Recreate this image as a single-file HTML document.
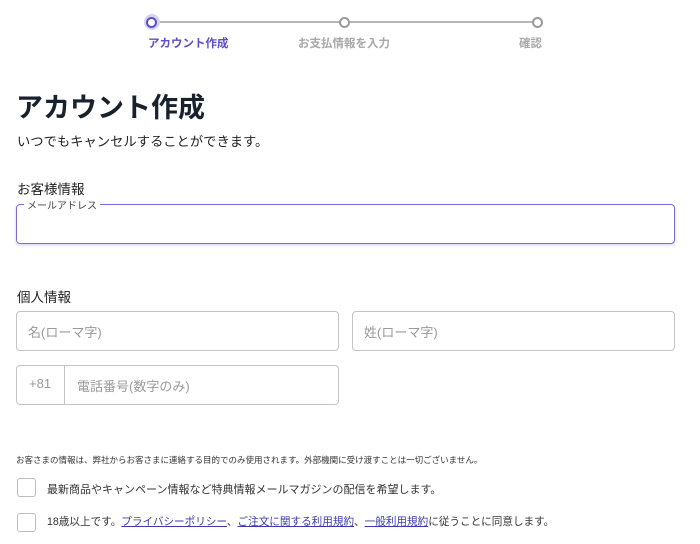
<!DOCTYPE html>
<html><head><meta charset="utf-8"><style>
body{margin:0;width:700px;height:544px;background:#fff;font-family:"Liberation Sans","Noto Sans CJK JP",sans-serif;color:#222;position:relative;overflow:hidden}
.a{position:absolute;white-space:nowrap}
.line{position:absolute;top:21px;height:2px;background:#b5b5b5}
.dot{position:absolute;width:7px;height:7px;border:2px solid #9a9a9a;border-radius:50%;background:#fff;top:17px}
.inp{position:absolute;border:1px solid #c4c4c4;border-radius:4px;box-sizing:border-box;background:#fff}
.ph{position:absolute;color:#9a9a9a;font-size:13px}
.cb{position:absolute;left:17px;width:19px;height:19px;border:1px solid #bdbdbd;border-radius:3px;box-sizing:border-box}
a{color:#3b3bb0;text-decoration:underline}
</style></head><body>
<div class="line" style="left:152px;width:386px"></div>
<div class="a" style="left:144px;top:14px;width:16px;height:16px;border-radius:50%;background:#d6d2f3"></div>
<div class="dot" style="left:146px;border-color:#5b4fc4"></div>
<div class="dot" style="left:339px"></div>
<div class="dot" style="left:532px"></div>
<div class="a" style="left:148px;top:35px;font-size:11.5px;font-weight:bold;color:#5b4fc4">アカウント作成</div>
<div class="a" style="left:298px;top:35px;font-size:11.5px;font-weight:bold;color:#a8a8a8">お支払情報を入力</div>
<div class="a" style="left:519px;top:35px;font-size:11.5px;font-weight:bold;color:#a8a8a8">確認</div>
<div class="a" style="left:16px;top:86px;font-size:27px;font-weight:bold;color:#18222e">アカウント作成</div>
<div class="a" style="left:17px;top:131px;font-size:13.3px;color:#222">いつでもキャンセルすることができます。</div>
<div class="a" style="left:17px;top:178px;font-size:13.5px;color:#222">お客様情報</div>
<div class="inp" style="left:16px;top:204px;width:659px;height:40px;border-color:#7b6fd6;box-shadow:0 1px 3px rgba(123,111,214,.35)"></div>
<div class="a" style="left:24px;top:197px;font-size:10px;color:#444;background:#fff;padding:0 3px">メールアドレス</div>
<div class="a" style="left:17px;top:286px;font-size:13.5px;color:#222">個人情報</div>
<div class="inp" style="left:16px;top:311px;width:323px;height:40px"></div>
<div class="ph" style="left:28px;top:322px">名(ローマ字)</div>
<div class="inp" style="left:352px;top:311px;width:323px;height:40px"></div>
<div class="ph" style="left:364px;top:322px">姓(ローマ字)</div>
<div class="inp" style="left:16px;top:365px;width:323px;height:40px"></div>
<div class="a" style="left:64px;top:366px;width:1px;height:38px;background:#c4c4c4"></div>
<div class="ph" style="left:29px;top:376px">+81</div>
<div class="ph" style="left:77px;top:376px">電話番号(数字のみ)</div>
<div class="a" style="left:16px;top:454px;font-size:8.5px;color:#333">お客さまの情報は、弊社からお客さまに連絡する目的でのみ使用されます。外部機関に受け渡すことは一切ございません。</div>
<div class="cb" style="top:478px"></div>
<div class="a" style="left:47px;top:481px;font-size:11px;color:#333">最新商品やキャンペーン情報など特典情報メールマガジンの配信を希望します。</div>
<div class="cb" style="top:513px"></div>
<div class="a" style="left:47px;top:514px;font-size:10.6px;color:#333">18歳以上です。<a>プライバシーポリシー</a>、<a>ご注文に関する利用規約</a>、<a>一般利用規約</a>に従うことに同意します。</div>
</body></html>
